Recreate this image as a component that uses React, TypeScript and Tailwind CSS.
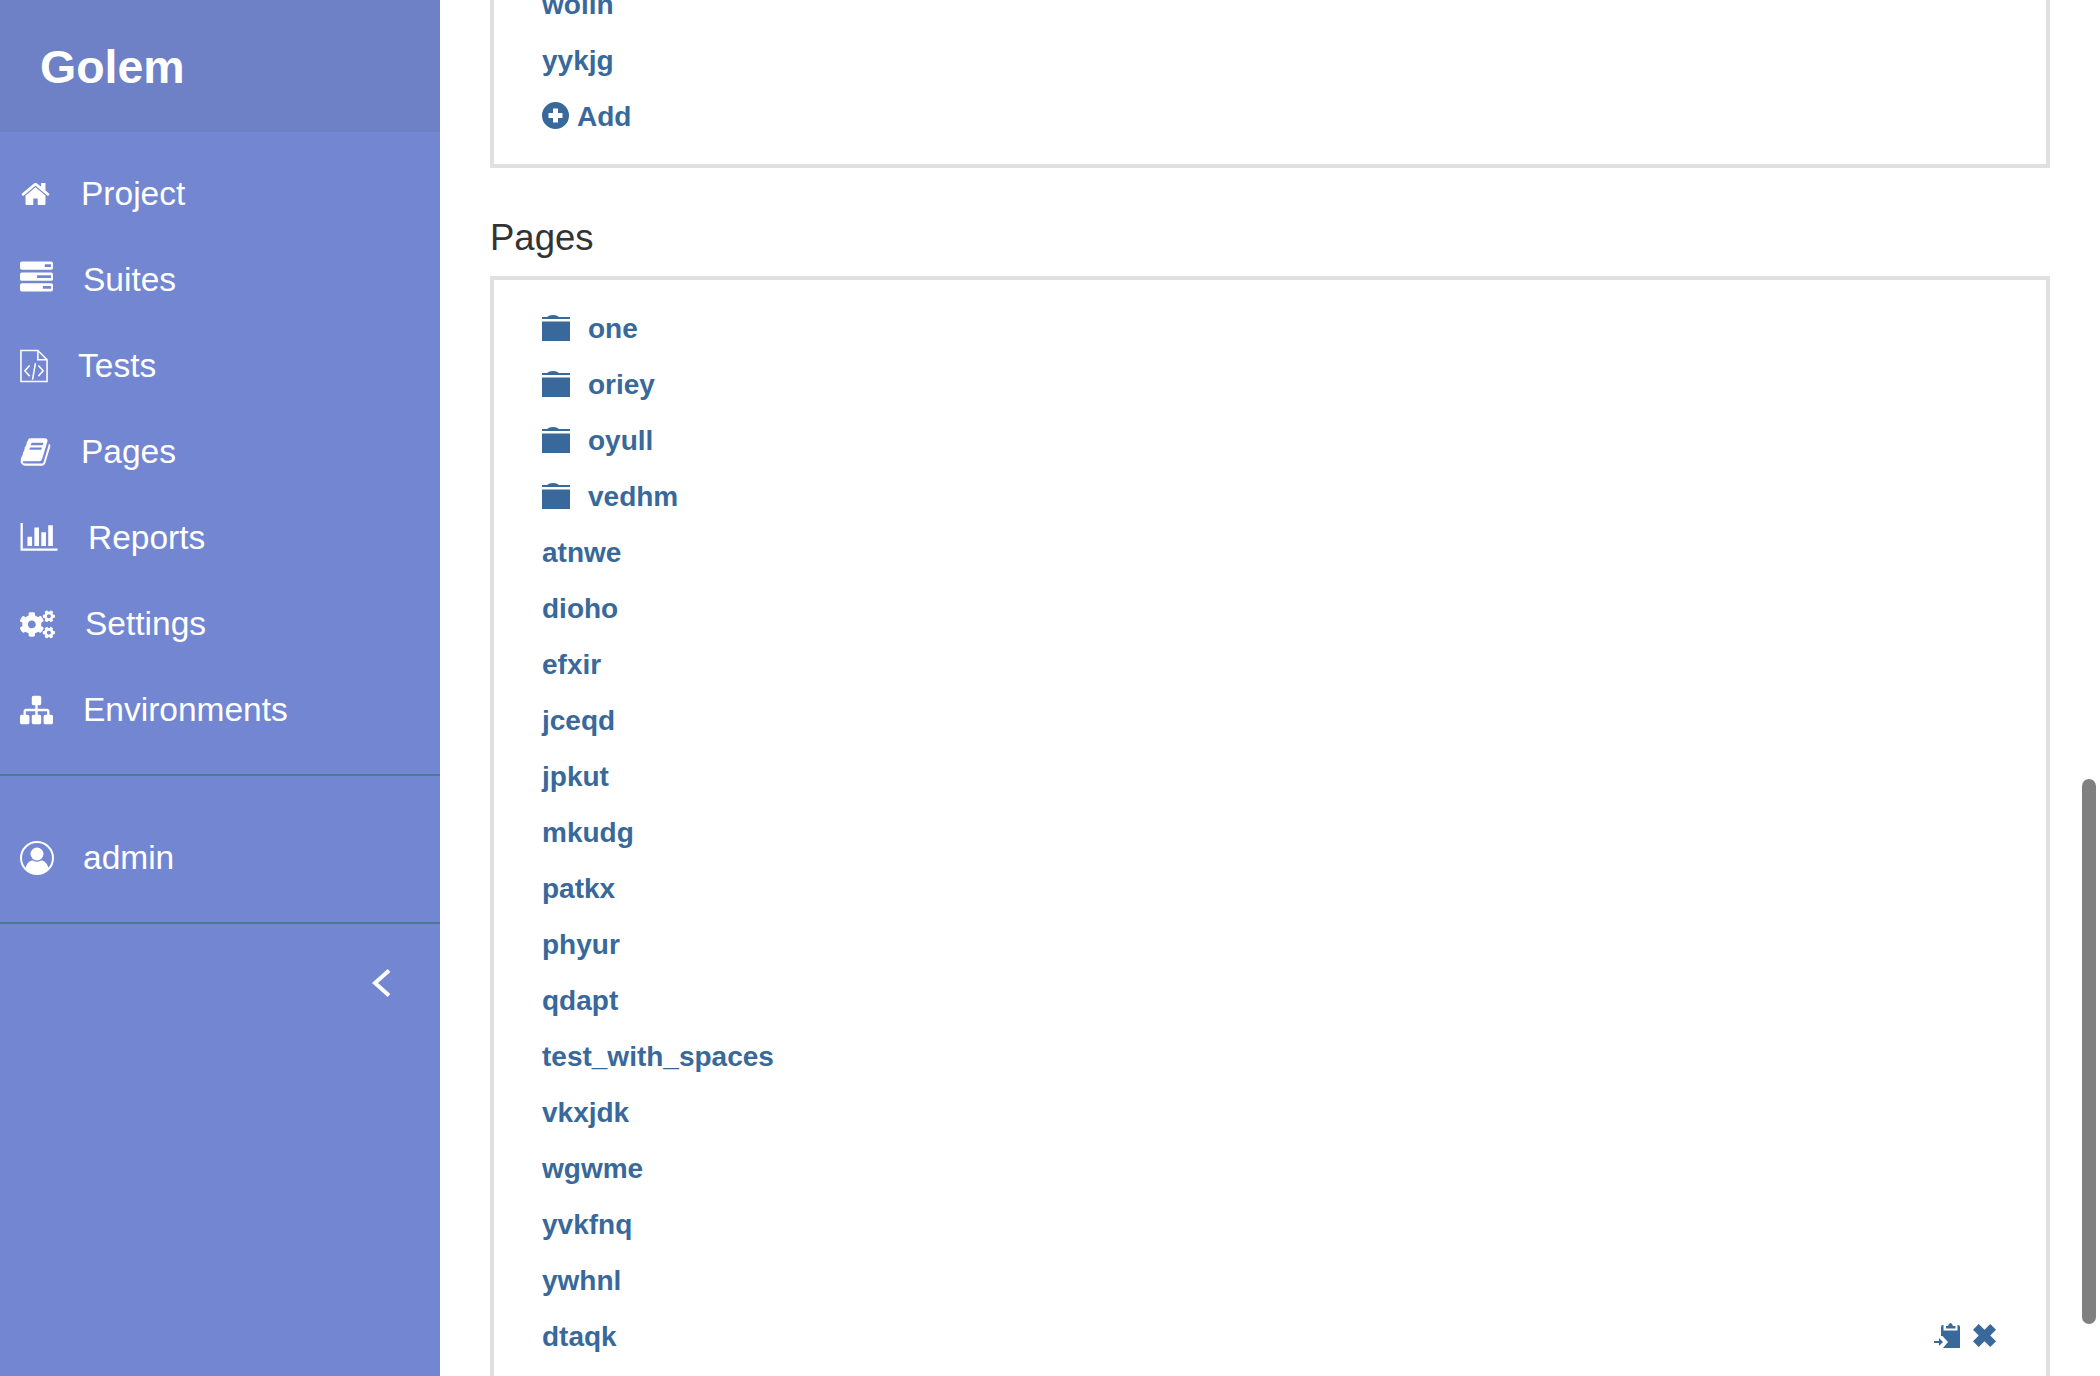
import { FaCogs } from "react-icons/fa";

function HomeIcon({ className }: { className?: string }) {
  return (
    <svg viewBox="0 0 1792 1792" fill="currentColor" className={className}>
      <path d="M1472 992v480q0 26-19 45t-45 19h-384v-384h-256v384h-384q-26 0-45-19t-19-45v-480q0-1 .5-3t.5-3l575-474 575 474q1 2 1 6zm223-69l-62 74q-8 9-21 11h-3q-13 0-21-7l-692-577-692 577q-12 8-24 7-13-2-21-11l-62-74q-8-10-7-23.500t11-21.500l719-599q32-26 76-26t76 26l244 204v-195q0-14 9-23t23-9h192q14 0 23 9t9 23v408l219 182q10 8 11 21.500t-7 23.500z" />
    </svg>
  );
}

function ServerIcon({ className }: { className?: string }) {
  return (
    <svg viewBox="0 0 34 31" className={className}>
      <path
        fill="currentColor"
        fillRule="evenodd"
        d="M2 0h30a2 2 0 0 1 2 2v4.500a2 2 0 0 1-2 2H2a2 2 0 0 1-2-2V2a2 2 0 0 1 2-2zm23.500 2.800v2.800h6.500v-2.800zM2 11.500h30a2 2 0 0 1 2 2v4.500a2 2 0 0 1-2 2H2a2 2 0 0 1-2-2v-4.500a2 2 0 0 1 2-2zm15.500 2.800v2.800h14.500v-2.800zM2 22.500h30a2 2 0 0 1 2 2v4.500a2 2 0 0 1-2 2H2a2 2 0 0 1-2-2v-4.500a2 2 0 0 1 2-2zm21.500 2.800v2.800h8.500v-2.800z"
      />
    </svg>
  );
}

function FileCodeIcon({ className }: { className?: string }) {
  return (
    <svg viewBox="0 0 29 34" fill="none" stroke="currentColor" strokeWidth="1.6" className={className}>
      <path d="M1 1h17.500L28 10.500V33H1z" />
      <path d="M18.500 1v9.500H28" />
      <path d="M10 16.500 5 22l5 5.500M19 16.500 24 22l-5 5.500M16 14l-3 17" />
    </svg>
  );
}

function BookIcon({ className }: { className?: string }) {
  return (
    <svg viewBox="0 0 1664 1792" fill="currentColor" className={className}>
      <path d="M1639 478q40 57 18 129l-275 906q-19 64-76.500 107.500t-122.500 43.500h-923q-77 0-148.500-53.500t-99.500-131.500q-24-67-2-127 0-4 3-27t4-37q1-8-3-21.500t-3-19.500q2-11 8-21t16.500-23.500 16.500-23.500q23-38 45-91.500t30-91.500q3-10 .5-30t-.5-28q3-11 17-28t17-23q21-36 42-92t25-90q1-9-2.500-32t.5-28q4-13 22-30.500t22-22.500q19-26 42.500-84.500t27.500-96.500q1-8-3-25.500t-2-26.500q2-8 9-18t18-23 17-21q8-12 16.500-30.500t15-35 16-36 19.500-32 26.500-23.500 36-11.500 47.500 5.500l-1 3q38-9 51-9h761q74 0 114 56t18 130l-274 906q-36 119-71.500 153.500t-128.500 34.500h-869q-27 0-38 15-11 16-1 43 24 70 144 70h923q29 0 56-15.500t35-41.500l300-987q7-22 5-57 38 15 59 43zm-1064 2q-4 13 2 22.500t20 9.500h608q13 0 25.500-9.500t16.500-22.500l21-64q4-13-2-22.500t-20-9.500h-608q-13 0-25.500 9.500t-16.500 22.500zm-83 256q-4 13 2 22.500t20 9.500h608q13 0 25.500-9.500t16.500-22.500l21-64q4-13-2-22.500t-20-9.500h-608q-13 0-25.500 9.500t-16.500 22.500z" />
    </svg>
  );
}

function BarChartIcon({ className }: { className?: string }) {
  return (
    <svg viewBox="0 0 2048 1664" fill="currentColor" className={className}>
      <path d="M640 768v512h-256v-512h256zm384-512v1024h-256v-1024h256zm1024 1152v128h-2048v-1536h128v1408h1920zm-640-896v768h-256v-768h256zm384-384v1152h-256v-1152h256z" />
    </svg>
  );
}

function SitemapIcon({ className }: { className?: string }) {
  return (
    <svg viewBox="0 0 1792 1792" fill="currentColor" className={className}>
      <path d="M1792 1248v320q0 40-28 68t-68 28h-320q-40 0-68-28t-28-68v-320q0-40 28-68t68-28h96v-192h-512v192h96q40 0 68 28t28 68v320q0 40-28 68t-68 28h-320q-40 0-68-28t-28-68v-320q0-40 28-68t68-28h96v-192h-512v192h96q40 0 68 28t28 68v320q0 40-28 68t-68 28h-320q-40 0-68-28t-28-68v-320q0-40 28-68t68-28h96v-192q0-52 38-90t90-38h512v-192h-96q-40 0-68-28t-28-68v-320q0-40 28-68t68-28h320q40 0 68 28t28 68v320q0 40-28 68t-68 28h-96v192h512q52 0 90 38t38 90v192h96q40 0 68 28t28 68z" />
    </svg>
  );
}

function UserCircleIcon() {
  return (
    <svg viewBox="0 0 34 34" className="h-[34px] w-[34px] shrink-0">
      <circle cx="17" cy="17" r="16" fill="none" stroke="currentColor" strokeWidth="2" />
      <circle cx="17" cy="13" r="6.500" fill="currentColor" />
      <path fill="currentColor" d="M5.500 27.500C6.500 22 10 19.500 13 19.500q4 2.500 8 0c3 0 6.500 2.500 7.500 8A15.500 15.500 0 0 1 5.500 27.500z" />
    </svg>
  );
}

function ChevronIcon() {
  return (
    <svg viewBox="0 0 20 28" fill="none" stroke="currentColor" strokeWidth="4" className="h-[28px] w-[20px]">
      <path d="M18 1.500 4 14l14 12.500" />
    </svg>
  );
}

function FolderIcon() {
  return (
    <svg viewBox="0 0 28 26" fill="currentColor" className="h-[26px] w-[28px] shrink-0 -translate-y-[1px]">
      <path d="M0 2h5q2-2 6-2t6 2h11v2H0zM0 6.500h28V26H0z" />
    </svg>
  );
}

function PlusCircleIcon() {
  return (
    <svg viewBox="0 0 27 27" className="h-[27px] w-[27px] shrink-0 -translate-y-[1px]">
      <path
        fill="currentColor"
        fillRule="evenodd"
        d="M13.500 0a13.500 13.500 0 1 1 0 27a13.500 13.500 0 0 1 0-27zM11 6.500v4.500H6.500v5H11v4.500h5V16h4.500v-5H16V6.500z"
      />
    </svg>
  );
}

function PasteIcon() {
  return (
    <svg viewBox="0 0 26 25" fill="currentColor" className="h-[25px] w-[26px]">
      <path d="M12 3h2q1-3 2.500-3T19 3h2.500v2.500H12z" />
      <path d="M7 4q0-2 2-2h.5v5.500h14V2h.5q2 0 2 2v21H9l5-6-5.500-6H7z" />
      <path d="M0 18h5v-3l4 4-4 4v-3H0z" />
    </svg>
  );
}

function RemoveIcon() {
  return (
    <svg viewBox="0 0 24 24" fill="currentColor" className="h-[23px] w-[23px]">
      <path d="M6 0l6 6 6-6 6 6-6 6 6 6-6 6-6-6-6 6-6-6 6-6-6-6z" />
    </svg>
  );
}

const navItems = [
  { label: "Project", icon: <HomeIcon className="h-[34px] w-[32px] max-w-none" />, width: "w-[31px]" },
  { label: "Suites", icon: <ServerIcon className="h-[31px] w-[34px] max-w-none -translate-y-[4px]" />, width: "w-[33px]" },
  { label: "Tests", icon: <FileCodeIcon className="h-[34px] w-[29px] max-w-none" />, width: "w-[28px]" },
  { label: "Pages", icon: <BookIcon className="h-[32px] w-[32px] max-w-none" />, width: "w-[31px]" },
  { label: "Reports", icon: <BarChartIcon className="h-[30px] w-[38px] max-w-none" />, width: "w-[38px]" },
  { label: "Settings", icon: <FaCogs className="h-[31px] w-[38px] max-w-none" />, width: "w-[35px]" },
  { label: "Environments", icon: <SitemapIcon className="h-[34px] w-[34px] max-w-none" />, width: "w-[33px]" },
];

const pageFolders = ["one", "oriey", "oyull", "vedhm"];
const pages = [
  "atnwe",
  "dioho",
  "efxir",
  "jceqd",
  "jpkut",
  "mkudg",
  "patkx",
  "phyur",
  "qdapt",
  "test_with_spaces",
  "vkxjdk",
  "wgwme",
  "yvkfnq",
  "ywhnl",
];

export default function App() {
  return (
    <div className="relative flex h-[1376px] overflow-hidden bg-white font-['Liberation_Sans',Arial,sans-serif]">
      <aside className="w-[440px] shrink-0 bg-[#7386d2] text-white">
        <div className="flex h-[132px] items-center bg-[#6e80c6] pt-[2px] pl-[40px]">
          <span className="text-[46.500px] font-bold leading-none">Golem</span>
        </div>
        <nav className="pt-[19px] pb-[21px]">
          {navItems.map((item) => (
            <div key={item.label} className="flex h-[86px] items-center gap-[30px] pl-[20px] text-[33.500px]">
              <span className={`flex shrink-0 justify-start ${item.width}`}>{item.icon}</span>
              <span>{item.label}</span>
            </div>
          ))}
        </nav>
        <div className="flex h-[150px] items-center gap-[29px] border-y-2 border-[#4b7a90] pt-[18px] pl-[20px] text-[33.500px]">
          <UserCircleIcon />
          <span>admin</span>
        </div>
        <div className="flex justify-end pt-[45px] pr-[49px]">
          <ChevronIcon />
        </div>
      </aside>

      <main className="flex-1 pr-[50px] pl-[50px] text-[28px] font-bold text-[#39689a]">
        <div className="-mt-[48px] border-4 border-[#e0e0e0] px-[48px] pt-[21px] pb-[19px]">
          <div className="flex h-[56px] items-center">wolln</div>
          <div className="flex h-[56px] items-center">yykjg</div>
          <div className="flex h-[56px] items-center gap-[8px] pb-[1px]">
            <PlusCircleIcon />
            <span>Add</span>
          </div>
        </div>

        <h2 className="mt-[47px] mb-[15px] text-[36.500px] leading-[46px] font-normal text-[#333333]">Pages</h2>

        <div className="border-4 border-[#e0e0e0] px-[48px] pt-[21px] pb-[19px]">
          {pageFolders.map((name) => (
            <div key={name} className="flex h-[56px] items-center gap-[18px]">
              <FolderIcon />
              <span>{name}</span>
            </div>
          ))}
          {pages.map((name) => (
            <div key={name} className="flex h-[56px] items-center">
              {name}
            </div>
          ))}
          <div className="flex h-[56px] items-center justify-between">
            <span>dtaqk</span>
            <div className="mr-[2px] flex -translate-y-[2px] items-center gap-[13px]">
              <PasteIcon />
              <RemoveIcon />
            </div>
          </div>
        </div>
      </main>

      <div className="absolute top-[779px] right-[4px] h-[545px] w-[14px] rounded-full bg-[#808080]" />
    </div>
  );
}
